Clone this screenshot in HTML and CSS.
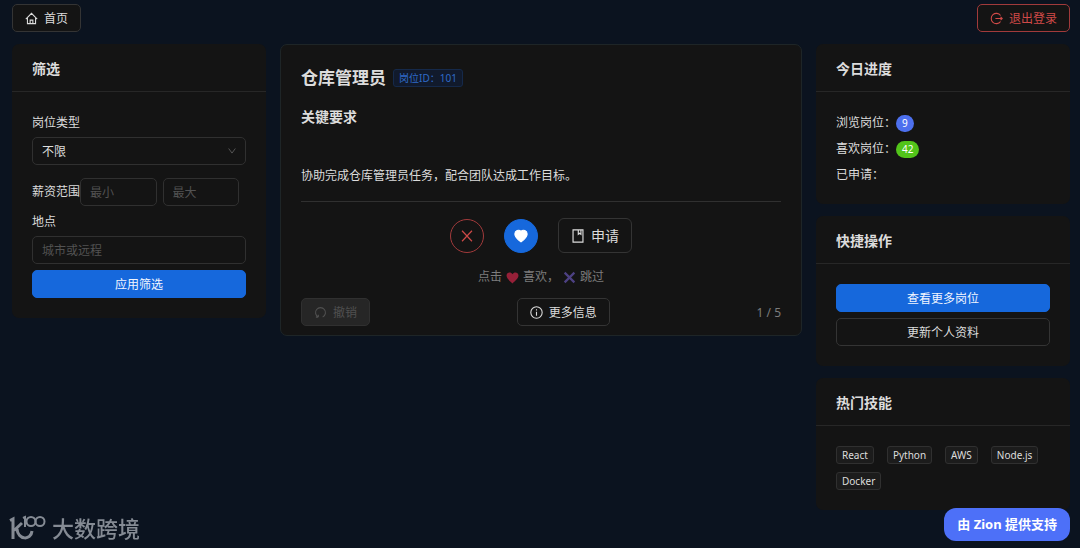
FILE: index.html
```html
<!DOCTYPE html>
<html lang="zh-CN">
<head>
<meta charset="utf-8">
<meta name="viewport" content="width=device-width, initial-scale=1">
<title>仓库管理员</title>
<link rel="stylesheet" href="styles.css">
</head>
<body>
<header class="topbar">
  <button class="btn" type="button">
    <svg class="icon" viewBox="0 0 24 24"><path d="M1.500 13 12 2.500 22.500 13M4.500 11v10.500h15V11M9.500 21.500v-6.500h5v6.500"/></svg>
    首页
  </button>
  <button class="btn btn-danger" type="button">
    <svg class="icon" viewBox="0 0 24 24"><path d="M19.500 6.500A9.500 9.500 0 1 0 19.500 17.500M10 12h12.500M19.500 9l3 3-3 3"/></svg>
    退出登录
  </button>
</header>

<main class="columns">
  <section class="card">
    <h2 class="card-head">筛选</h2>
    <form class="card-body filters">
      <label class="label" for="type">岗位类型</label>
      <div class="select-wrap">
        <select class="field" id="type"><option>不限</option></select>
        <svg class="chevron" viewBox="0 0 12 12"><path d="M2 3l4 5.500L10 3"/></svg>
      </div>
      <div class="salary">
        <label class="label" for="min">薪资范围</label>
        <div class="range">
          <input class="field" id="min" type="text" placeholder="最小">
          <input class="field" type="text" placeholder="最大" aria-label="最大">
        </div>
      </div>
      <label class="label" for="place">地点</label>
      <input class="field" id="place" type="text" placeholder="城市或远程">
      <button class="btn btn-primary apply" type="button">应用筛选</button>
    </form>
  </section>

  <article class="card job">
    <div class="job-title">
      <h1>仓库管理员</h1>
      <span class="tag tag-blue">岗位ID：101</span>
    </div>
    <h2 class="job-sub">关键要求</h2>
    <p class="job-text">协助完成仓库管理员任务，配合团队达成工作目标。</p>
    <div class="actions">
      <button class="round round-skip" type="button" aria-label="跳过">
        <svg class="icon-lg" viewBox="0 0 24 24"><path d="M3.500 3l17 18M20.500 3l-17 18"/></svg>
      </button>
      <button class="round round-like" type="button" aria-label="喜欢">
        <svg class="icon-lg" viewBox="0 0 24 24"><path class="solid" d="M12 22C8 19 1.500 14.500 1.500 8.500 1.500 2.500 8.500.5 12 4c3.500-3.500 10.500-1.500 10.500 4.500C22.500 14.500 16 19 12 22z"/></svg>
      </button>
      <button class="btn btn-large" type="button">
        <svg class="icon-lg" viewBox="0 0 24 24"><path d="M3.500 1.500h17v21h-17zM12.500 2v7l2.200-1.700L17 9V2"/></svg>
        申请
      </button>
    </div>
    <p class="hint">点击
      <svg class="emoji" viewBox="0 0 24 24"><path fill="#962038" d="M12 23C8 19 1 14.500 1 8.500 1 2 9 .5 12 6c3-5.500 11-4 11 2.500C23 14.500 16 19 12 23z"/></svg>
      喜欢，<svg class="emoji" viewBox="0 0 24 24"><path fill="none" stroke="#4d4183" stroke-width="4" d="M3 3l18 18M21 3 3 21"/></svg>
      跳过</p>
    <div class="job-foot">
      <button class="btn" type="button" disabled>
        <svg class="icon" viewBox="0 0 24 24"><path d="M8 20.500a9.200 9.200 0 1 1 8 0M8 20.500V16M8 20.500H3.500"/></svg>
        撤销
      </button>
      <button class="btn" type="button">
        <svg class="icon" viewBox="0 0 24 24"><circle cx="12" cy="12" r="10.500"/><path d="M12 10.500V18M12 6v2.500"/></svg>
        更多信息
      </button>
      <span class="pager">1 / 5</span>
    </div>
  </article>

  <aside class="side">
    <section class="card">
      <h2 class="card-head">今日进度</h2>
      <ul class="card-body stats">
        <li>浏览岗位：<span class="badge">9</span></li>
        <li>喜欢岗位：<span class="badge badge-green">42</span></li>
        <li>已申请：</li>
      </ul>
    </section>
    <section class="card">
      <h2 class="card-head">快捷操作</h2>
      <div class="card-body quick">
        <button class="btn btn-primary" type="button">查看更多岗位</button>
        <button class="btn" type="button">更新个人资料</button>
      </div>
    </section>
    <section class="card">
      <h2 class="card-head">热门技能</h2>
      <div class="card-body skills">
        <span class="tag">React</span>
        <span class="tag">Python</span>
        <span class="tag">AWS</span>
        <span class="tag">Node.js</span>
        <span class="tag">Docker</span>
      </div>
    </section>
  </aside>
</main>

<div class="brand">
  <svg class="brand-mark" viewBox="0 0 38 26"><path d="M1 5.500l3-1.500v20M13 8 5 15.500M8 14c1 11 14 12 15 2"/><path class="thin" d="M14 3l2-1v10"/><circle class="thin" cx="22" cy="6.500" r="4.500"/><circle class="thin" cx="31" cy="6.500" r="4.500"/></svg>
  <span>大数跨境</span>
</div>
<a class="powered" href="#">由 Zion 提供支持</a>
</body>
</html>
```
FILE: styles.css
```css
* {
  box-sizing: border-box;
}

body {
  margin: 0;
  padding: 4px 10px 4px 12px;
  background: #0b131f;
  color: #dcdcdc;
  font: 12px/18px "Noto Sans", "Noto Sans CJK SC", sans-serif;
}

h1, h2, p, ul {
  margin: 0;
  padding: 0;
}

button, input, select {
  font: inherit;
  color: inherit;
}

svg {
  flex: none;
  fill: none;
  stroke: currentColor;
}

.topbar {
  display: flex;
  justify-content: space-between;
  margin-bottom: 12px;
}

.btn {
  display: inline-flex;
  align-items: center;
  justify-content: center;
  gap: 6px;
  height: 28px;
  padding: 1px 12px 0;
  border: 1px solid #343434;
  border-radius: 5px;
  background: #141414;
  white-space: nowrap;
}

.btn-danger {
  border-color: #a13a3b;
  color: #d04a48;
}

.btn-primary {
  border-color: #1668dc;
  background: #1668dc;
  color: #f2f6ff;
}

.btn:disabled {
  border-color: #303030;
  background: #262626;
  color: #505050;
}

.btn-large {
  height: 35px;
  border-radius: 6px;
  font-size: 14px;
}

.icon {
  width: 13px;
  height: 13px;
  stroke-width: 2;
}

.icon-lg {
  width: 14px;
  height: 14px;
  stroke-width: 2;
}

.columns {
  display: grid;
  grid-template-columns: minmax(0, 254fr) minmax(0, 522fr) minmax(0, 254fr);
  align-items: start;
  gap: 14px;
}

.card {
  border-radius: 7px;
  background: #141414;
}

.card-head {
  padding: 15px 20px 12px;
  border-bottom: 1px solid #272727;
  font-size: 14px;
  line-height: 20px;
}

.card-body {
  padding: 20px;
}

.filters {
  display: flex;
  flex-direction: column;
}

.label {
  line-height: 22px;
}

.field {
  width: 100%;
  height: 28px;
  padding: 1px 9px 0;
  border: 1px solid #303030;
  border-radius: 5px;
  outline: 0;
  background: #141414;
  appearance: none;
}

.field::placeholder {
  color: #525252;
}

.select-wrap {
  position: relative;
  margin-top: 3px;
}

.select-wrap .field {
  display: block;
}

.chevron {
  position: absolute;
  top: 9px;
  right: 9px;
  width: 10px;
  height: 10px;
  color: #606060;
}

.salary {
  display: flex;
  align-items: center;
  margin: 13px 0 5px;
}

.salary .label {
  flex: none;
}

.range {
  display: flex;
  flex: 1;
  gap: 6px;
  min-width: 0;
  margin-right: 7px;
}

#place {
  margin-top: 3px;
}

.apply {
  margin-top: 6px;
}

.job {
  padding: 22px 20px 9px;
  border: 1px solid #1e2527;
}

.job-title {
  display: flex;
  align-items: center;
  gap: 7px;
}

.job-title h1 {
  font-size: 17px;
  line-height: 22px;
}

.job-sub {
  margin-top: 18px;
  font-size: 14px;
  line-height: 20px;
}

.job-text {
  margin-top: 40px;
  padding-bottom: 16px;
  border-bottom: 1px solid #303030;
}

.tag {
  padding: 0 5px;
  border: 1px solid #303030;
  border-radius: 3px;
  background: #1c1c1c;
  font-size: 10px;
  line-height: 16px;
}

.tag-blue {
  border-color: #15294a;
  background: #111a2c;
  color: #2f6ac8;
}

.actions {
  display: flex;
  align-items: center;
  justify-content: center;
  gap: 20px;
  margin-top: 16px;
}

.round {
  display: flex;
  align-items: center;
  justify-content: center;
  width: 34px;
  height: 34px;
  padding: 0;
  border: 1px solid;
  border-radius: 50%;
}

.round-skip {
  border-color: #a13a3b;
  background: #141414;
  color: #d04a48;
}

.round-like {
  border-color: #1668dc;
  background: #1668dc;
  color: #fff;
}

.solid {
  fill: currentColor;
}

.hint {
  display: flex;
  align-items: center;
  justify-content: center;
  gap: 4px;
  margin-top: 15px;
  color: #7c7c7c;
}

.emoji {
  width: 13px;
  height: 13px;
  stroke: none;
}

.job-foot {
  display: flex;
  align-items: center;
  justify-content: space-between;
  margin-top: 12px;
}

.pager {
  padding-top: 1px;
  color: #7c7c7c;
}

.side {
  display: grid;
  gap: 12px;
}

.stats {
  display: grid;
  gap: 4px;
  padding-bottom: 18px;
  line-height: 22px;
  list-style: none;
}

.stats li {
  display: flex;
  align-items: center;
}

.badge {
  min-width: 17px;
  padding: 0 6px;
  border-radius: 9px;
  background: #4d70ee;
  color: #fff;
  font-size: 10px;
  line-height: 17px;
}

.badge-green {
  background: #52c41a;
}

.quick {
  display: grid;
  gap: 6px;
}

.skills {
  display: flex;
  flex-wrap: wrap;
  gap: 8px 13px;
}

.brand {
  position: fixed;
  bottom: 6px;
  left: 9px;
  display: flex;
  align-items: center;
  gap: 5px;
  color: #858b94;
  font-size: 22px;
  font-weight: 500;
  line-height: 28px;
}

.brand-mark {
  width: 38px;
  height: 26px;
  stroke-width: 3;
}

.thin {
  stroke-width: 2;
}

.powered {
  position: fixed;
  right: 10px;
  bottom: 7px;
  padding: 0 13px;
  border-radius: 12px;
  background: #4d70f8;
  color: #fff;
  font-size: 13px;
  font-weight: 700;
  line-height: 33px;
  text-decoration: none;
}
```
